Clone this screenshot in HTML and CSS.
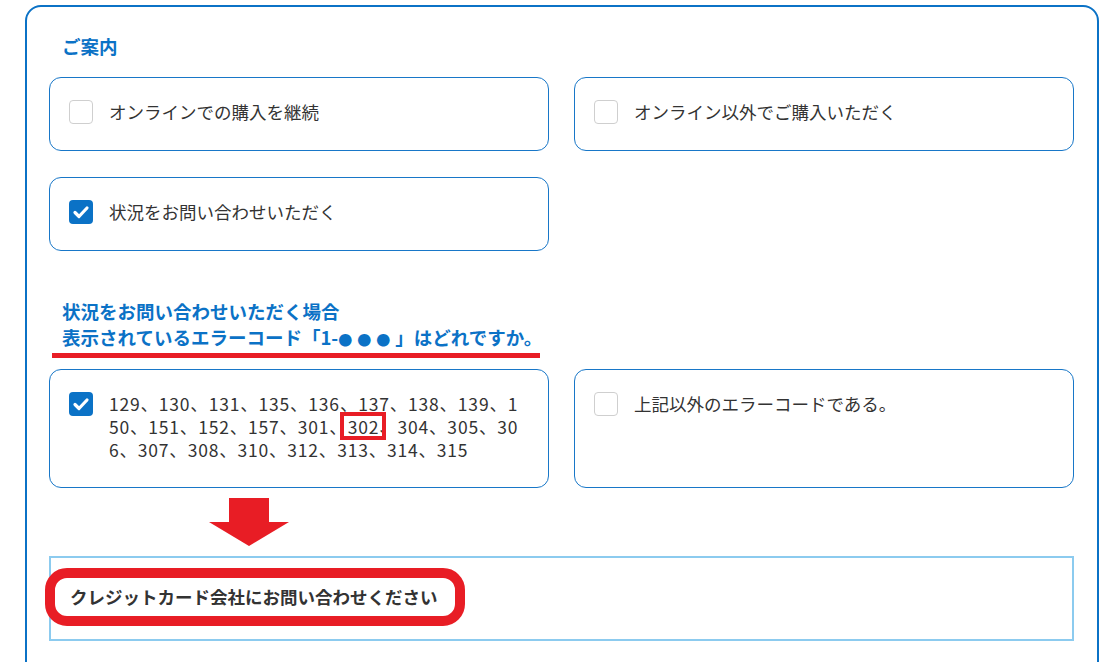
FILE: index.html
```html
<!DOCTYPE html>
<html lang="ja">

<head>
    <meta charset="UTF-8">
    <meta name="viewport" content="width=device-width, initial-scale=1.0">
    <title>ご案内</title>
    <link rel="stylesheet" href="styles.css">
</head>

<body>
    <div class="page">
        <section class="panel">
            <h2 class="panel-title">ご案内</h2>

            <div class="choices">
                <label class="choice">
                    <span class="check"></span>
                    <span class="choice-text">オンラインでの購入を継続</span>
                </label>
                <label class="choice">
                    <span class="check"></span>
                    <span class="choice-text">オンライン以外でご購入いただく</span>
                </label>
                <label class="choice">
                    <span class="check is-checked">
                        <svg viewBox="0 0 24 24" width="24" height="24"><path d="M6 12.5l4 4 8-8.5" fill="none" stroke="#fff" stroke-width="3.2" stroke-linecap="round" stroke-linejoin="round"/></svg>
                    </span>
                    <span class="choice-text">状況をお問い合わせいただく</span>
                </label>
            </div>

            <p class="question">状況をお問い合わせいただく場合<br>表示されているエラーコード「1-<span class="dots">●●●</span>」はどれですか。</p>
            <div class="mark-line"></div>

            <div class="choices">
                <label class="choice">
                    <span class="check is-checked">
                        <svg viewBox="0 0 24 24" width="24" height="24"><path d="M6 12.5l4 4 8-8.5" fill="none" stroke="#fff" stroke-width="3.2" stroke-linecap="round" stroke-linejoin="round"/></svg>
                    </span>
                    <span class="choice-text codes">129、130、131、135、136、137、138、139、150、151、152、157、301、<span class="mark-box">302、</span>304、305、306、307、308、310、312、313、314、315</span>
                </label>
                <label class="choice">
                    <span class="check"></span>
                    <span class="choice-text">上記以外のエラーコードである。</span>
                </label>
            </div>

            <div class="arrow">
                <svg viewBox="0 0 80 48" width="80" height="48"><path d="M20 0h40v24h20L40 48 0 24h20z" fill="#e81d25"/></svg>
            </div>

            <div class="answer">
                <p class="answer-pill">クレジットカード会社にお問い合わせください</p>
            </div>
        </section>
    </div>
</body>

</html>
```

FILE: styles.css
```css
body {
    margin: 0;
    background-color: #fff;
    color: #333;
    font-family: "Noto Sans CJK JP", "Noto Sans", sans-serif;
}

.page {
    height: 657px;
    overflow: hidden;
    padding: 5px 0 0 25px;
}

.panel {
    width: 1074px;
    box-sizing: border-box;
    border: 2px solid #0b72c6;
    border-radius: 16px;
    padding: 26px 23px 80px 22px;
}

.panel-title {
    margin: 0 0 18px 13px;
    font-size: 18.5px;
    line-height: 26px;
    font-weight: bold;
    color: #0b72c6;
}

.choices {
    display: grid;
    grid-template-columns: 1fr 1fr;
    column-gap: 25px;
    row-gap: 26px;
}

.choice {
    display: flex;
    align-items: flex-start;
    gap: 16px;
    border: 1px solid #1877c8;
    border-radius: 12px;
    padding: 22px 28px 26px 19px;
}

.check {
    flex: none;
    width: 24px;
    height: 24px;
    box-sizing: border-box;
    border: 1px solid #cfcfcf;
    border-radius: 4px;
    background-color: #fff;
}

.check.is-checked {
    border: none;
    background-color: #0b72c6;
}

.check svg {
    display: block;
}

.choice-text {
    font-size: 17.5px;
    line-height: 24px;
}

.codes {
    min-width: 0;
    margin-right: -6px;
    line-height: 23px;
    word-break: break-all;
    line-break: anywhere;
    letter-spacing: 0.8px;
}

/* red frame drawn over the code */
.mark-box {
    position: relative;
}

.mark-box::after {
    content: "";
    position: absolute;
    left: -8px;
    right: 12px;
    top: -2px;
    bottom: -1px;
    border: 4px solid #e81d25;
}

.question {
    margin: 47px 0 0 13px;
    font-size: 18.5px;
    line-height: 26px;
    font-weight: bold;
    color: #0b72c6;
}

.dots {
    font-size: 14px;
    line-height: 1;
    letter-spacing: 5px;
}

.mark-line {
    width: 488px;
    height: 5px;
    margin: 3px 0 11px 3px;
    background-color: #e81d25;
}

.arrow {
    margin: 10px 0 10px 160px;
    line-height: 0;
}

.answer {
    border: 2px solid #8ccbef;
    padding: 10px 0 13px;
}

.answer-pill {
    display: inline-block;
    margin: 0 0 0 -6px;
    border: 10px solid #e81d25;
    border-radius: 22px;
    background-color: #fff;
    padding: 0 17px 0 15px;
    font-size: 17.5px;
    line-height: 38px;
    font-weight: bold;
    color: #333;
}
```
